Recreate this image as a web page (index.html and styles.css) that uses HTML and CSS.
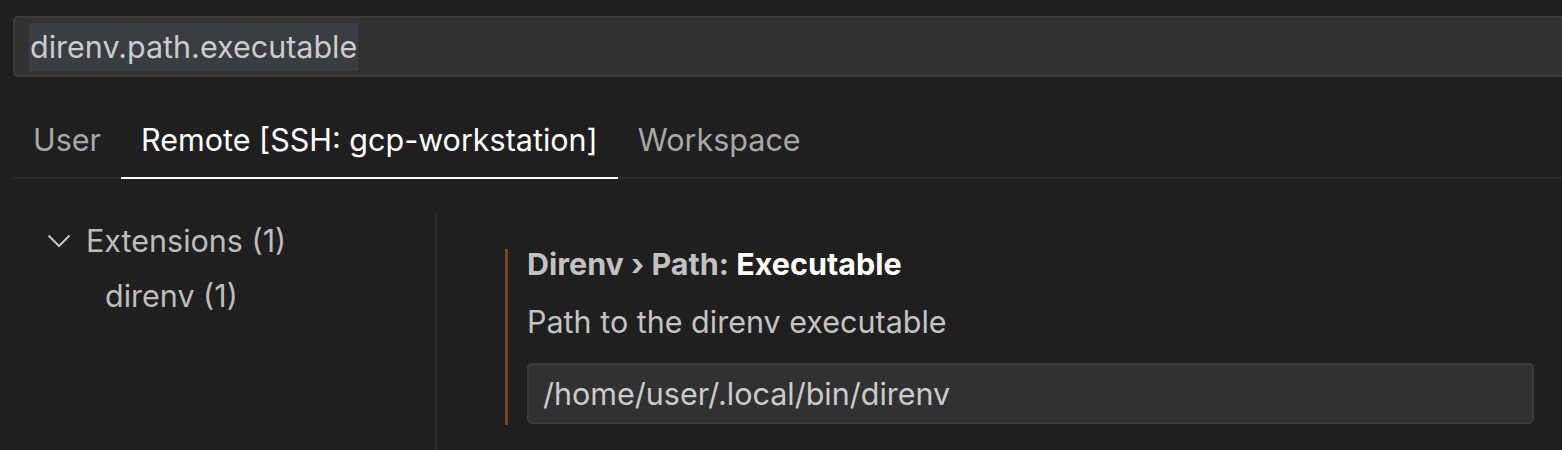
FILE: index.html
```html
<!DOCTYPE html>
<html>
<head>
<meta charset="utf-8">
<link rel="stylesheet" href="styles.css">
</head>
<body>
<div class="page">
  <div class="search-wrap">
    <div class="search"><span class="sel">direnv.path.executable</span></div>
  </div>
  <div class="tabs">
    <div class="tab">User</div>
    <div class="tab active">Remote [SSH: gcp-workstation]</div>
    <div class="tab">Workspace</div>
  </div>
  <div class="body">
    <div class="tree">
      <div class="row group">
        <svg class="chev" width="24" height="14" viewBox="0 0 24 14"><path d="M1.5 1.5 L12 12 L22.5 1.5" fill="none" stroke="#c5c5c5" stroke-width="2"/></svg>
        <span>Extensions (1)</span>
      </div>
      <div class="row child">direnv (1)</div>
    </div>
    <div class="divider"></div>
    <div class="content">
      <div class="setting">
        <div class="title"><span class="cat">Direnv › Path: </span><span class="name">Executable</span></div>
        <div class="desc">Path to the direnv executable</div>
        <div class="input">/home/user/.local/bin/direnv</div>
      </div>
    </div>
  </div>
</div>
</body>
</html>
```
FILE: styles.css
```css
* { box-sizing: border-box; }
html, body { margin: 0; padding: 0; }
body {
  background: #1f1f1f;
  font-family: Inter, "Noto Sans", sans-serif;
  font-size: 30.5px;
  color: #cccccc;
  overflow: hidden;
  width: 1562px;
  height: 450px;
}
.page { padding: 16px 0 0 13px; height: 450px; overflow: hidden; }
.search-wrap { margin-right: -40px; }
.search {
  height: 61px;
  border: 2px solid #3c3c3c;
  border-radius: 5px;
  background: #313131;
  padding: 4px 0 0 14px;
  display: flex;
  align-items: center;
}
.search .sel {
  background: #393c41;
  color: #cccccc;
  height: 48px;
  line-height: 48px;
  padding: 0 1px 0 1px;
  margin-top: -4px;
}
.tabs {
  display: flex;
  margin-top: 23px;
  border-bottom: 2px solid #2b2b2b;
}
.tab {
  padding: 0 20px;
  height: 79px;
  line-height: 80px;
  color: #a8a8a8;
  border-bottom: 2px solid transparent;
  margin-bottom: -2px;
}
.tab.active {
  color: #ffffff;
  border-bottom-color: #ffffff;
}
.body {
  display: flex;
  padding-top: 34px;
  height: 271px;
}
.tree {
  width: 422px;
  padding-top: 4px;
}
.row {
  height: 48px;
  line-height: 48px;
  display: flex;
  align-items: center;
  color: #bdbdbd;
}
.group { padding-left: 34px; }
.chev { margin-right: 15px; }
.child { padding-left: 92px; margin-top: 7px; }
.divider {
  width: 2px;
  background: #2b2b2b;
}
.content {
  flex: 1;
  padding: 38px 0 0 68px;
}
.setting {
  border-left: 3px solid #6a4b1f;
  padding-left: 19px;
  width: 1029px;
  padding-bottom: 1px;
}
.title {
  font-weight: 700;
  color: #ffffff;
  line-height: 30px;
  margin-top: -2px;
}
.title .cat { color: #c2c2c2; }
.desc {
  margin-top: 28px;
  line-height: 30px;
  color: #c4c4c4;
}
.input {
  margin-top: 26px;
  height: 61px;
  border: 2px solid #3c3c3c;
  border-radius: 5px;
  background: #313131;
  padding-left: 14px;
  line-height: 57px;
  color: #cccccc;
}
```
